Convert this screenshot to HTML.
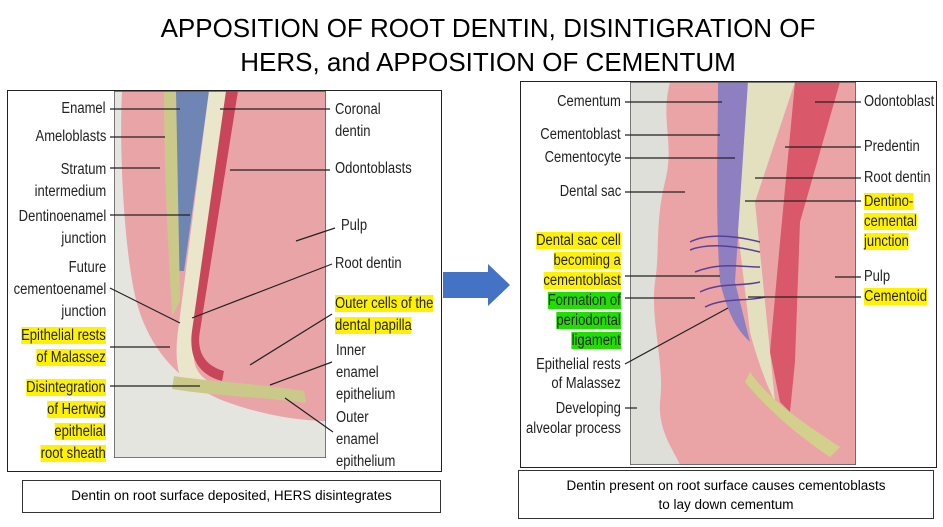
<!DOCTYPE html>
<html><head><meta charset="utf-8"><style>
body{margin:0;width:943px;height:527px;background:#fff;position:relative;overflow:hidden;font-family:"Liberation Sans",sans-serif}
.t{position:absolute;left:0;width:976px;text-align:center;font-size:26px;color:#000;line-height:34px}
.l{position:absolute;font-family:"Liberation Sans",sans-serif;font-size:15.5px;color:#222;line-height:18px;white-space:nowrap;transform:scaleX(.84);transform-origin:left top}
.r{text-align:right;transform-origin:right top}
.y{background:#fff200}
.g{background:#22dd00}
.box{position:absolute;border:1px solid #222}
.cap{position:absolute;border:1px solid #333;font-size:13.5px;text-align:center;line-height:19px}
</style></head><body>
<div class="t" style="top:11px">APPOSITION OF ROOT DENTIN, DISINTIGRATION OF</div>
<div class="t" style="top:45px">HERS, and APPOSITION OF CEMENTUM</div>

<div class="box" style="left:7px;top:90px;width:433px;height:380px"></div>
<svg style="position:absolute;left:114px;top:91px" width="212" height="367" viewBox="0 0 212 367">
<rect width="212" height="367" fill="#e9a4a8"/>
<path d="M0 0 L8 0 C5 60 10 150 20 200 C30 250 60 290 110 310 C150 325 190 330 212 330 L212 367 L0 367 Z" fill="#e5e5e0"/>
<path d="M55 0 L95 0 L70 180 L62 180 Z" fill="#6f86b5"/>
<path d="M95 0 L118 0 L80 260 C78 280 90 292 110 295 L80 300 C64 295 60 270 64 240 Z" fill="#e9e6cc"/>
<path d="M112 0 L124 0 L86 240 C82 262 92 275 110 280 L108 290 C88 285 74 270 78 240 Z" fill="#c9465a"/>
<path d="M50 0 L62 0 L66 210 L58 225 C54 150 50 80 50 0 Z" fill="#cbc98a"/>
<path d="M60 285 C90 290 140 292 190 300 L192 312 C150 306 100 305 58 298 Z" fill="#cbc98a"/>
<rect x="0" y="0" width="212" height="367" fill="none" stroke="#555" stroke-width="1.5"/>
</svg>
<div class="l r" style="right:837px;top:100px">Enamel</div>
<div class="l r" style="right:837px;top:128px">Ameloblasts</div>
<div class="l r" style="right:837px;top:159px;line-height:22px">Stratum<br>intermedium</div>
<div class="l r" style="right:837px;top:206px;line-height:22px">Dentinoenamel<br>junction</div>
<div class="l r" style="right:837px;top:257px;line-height:22px">Future<br>cementoenamel<br>junction</div>
<div class="l r" style="right:837px;top:325px;line-height:22px"><span class="y">Epithelial rests</span><br><span class="y">of Malassez</span></div>
<div class="l r" style="right:837px;top:377px;line-height:22px"><span class="y">Disintegration</span><br><span class="y">of Hertwig</span><br><span class="y">epithelial</span><br><span class="y">root sheath</span></div>
<div class="l" style="left:335px;top:99px;line-height:22px">Coronal<br>dentin</div>
<div class="l" style="left:335px;top:160px">Odontoblasts</div>
<div class="l" style="left:341px;top:217px">Pulp</div>
<div class="l" style="left:335px;top:255px">Root dentin</div>
<div class="l" style="left:335px;top:293px;line-height:22px"><span class="y">Outer cells of the</span><br><span class="y">dental papilla</span></div>
<div class="l" style="left:336px;top:340px;line-height:22px">Inner<br>enamel<br>epithelium</div>
<div class="l" style="left:336px;top:407px;line-height:22px">Outer<br>enamel<br>epithelium</div>
<svg style="position:absolute;left:0;top:0" width="943" height="527">
<g stroke="#222" stroke-width="1.2">
<line x1="110" y1="109" x2="180" y2="109"/><line x1="110" y1="137" x2="165" y2="137"/><line x1="110" y1="168" x2="160" y2="168"/><line x1="110" y1="215" x2="190" y2="215"/>
<line x1="110" y1="288" x2="180" y2="323"/><line x1="110" y1="347" x2="170" y2="347"/><line x1="110" y1="386" x2="200" y2="386"/>
<line x1="220" y1="109" x2="330" y2="109"/><line x1="230" y1="170" x2="330" y2="170"/><line x1="296" y1="241" x2="335" y2="228"/><line x1="192" y1="318" x2="332" y2="264"/><line x1="250" y1="365" x2="332" y2="314"/><line x1="270" y1="385" x2="332" y2="362"/><line x1="285" y1="398" x2="333" y2="432"/>
</g>
<path d="M443 272 L488 272 L488 264 L510 285 L488 306 L488 298 L443 298 Z" fill="#4472c4"/>
</svg>
<div class="cap" style="left:22px;top:480px;width:417px;height:31px;line-height:30px">Dentin on root surface deposited, HERS disintegrates</div>

<div class="box" style="left:520px;top:81px;width:415px;height:385px"></div>
<svg style="position:absolute;left:630px;top:82px" width="226" height="383" viewBox="0 0 226 383">
<rect width="226" height="383" fill="#eba4a6"/>
<path d="M0 0 L40 0 C30 40 45 60 35 100 C25 140 30 170 25 200 C20 240 35 280 30 320 C28 350 45 370 50 383 L0 383 Z" fill="#dedfd8"/>
<path d="M88 0 L118 0 L105 200 L120 260 C110 250 100 240 90 200 C85 130 88 60 88 0 Z" fill="#8e7fc0"/>
<path d="M118 0 L165 0 L125 120 L145 320 C135 300 125 270 120 250 L108 150 Z" fill="#e3e0bf"/>
<path d="M165 0 L210 0 L170 140 L165 280 L160 330 L150 320 L140 270 L150 160 Z" fill="#d9596a"/>
<path d="M120 290 C140 320 180 345 210 365 L200 375 C170 355 140 330 115 300 Z" fill="#d3d08c"/>
<g stroke="#5b3e96" stroke-width="1.5" fill="none"><path d="M60 160 C80 150 110 155 130 160"/><path d="M60 168 C80 160 110 165 130 170"/><path d="M65 190 C90 180 110 185 130 185"/><path d="M70 210 C90 200 110 205 130 200"/><path d="M75 225 C95 215 115 220 135 215"/></g>
<rect width="226" height="383" fill="none" stroke="#555" stroke-width="1.5"/>
</svg>
<div class="l r" style="right:322px;top:93px">Cementum</div>
<div class="l r" style="right:322px;top:126px">Cementoblast</div>
<div class="l r" style="right:322px;top:149px">Cementocyte</div>
<div class="l r" style="right:322px;top:183px">Dental sac</div>
<div class="l r" style="right:322px;top:231px;line-height:20px"><span class="y">Dental sac cell</span><br><span class="y">becoming a</span><br><span class="y">cementoblast</span><br><span class="g">Formation of</span><br><span class="g">periodontal</span><br><span class="g">ligament</span></div>
<div class="l r" style="right:322px;top:355px;line-height:19px">Epithelial rests<br>of Malassez</div>
<div class="l r" style="right:322px;top:399px;line-height:20px">Developing<br>alveolar process</div>
<div class="l" style="left:864px;top:93px">Odontoblast</div>
<div class="l" style="left:864px;top:138px">Predentin</div>
<div class="l" style="left:864px;top:169px">Root dentin</div>
<div class="l" style="left:864px;top:192px;line-height:20px"><span class="y">Dentino-</span><br><span class="y">cemental</span><br><span class="y">junction</span></div>
<div class="l" style="left:864px;top:268px">Pulp</div>
<div class="l" style="left:864px;top:288px"><span class="y">Cementoid</span></div>
<svg style="position:absolute;left:0;top:0" width="943" height="527">
<g stroke="#222" stroke-width="1.2">
<line x1="625" y1="102" x2="722" y2="102"/><line x1="625" y1="135" x2="720" y2="135"/><line x1="625" y1="158" x2="735" y2="158"/><line x1="625" y1="192" x2="685" y2="192"/>
<line x1="625" y1="276" x2="720" y2="276"/><line x1="625" y1="298" x2="695" y2="298"/><line x1="625" y1="364" x2="728" y2="308"/><line x1="625" y1="408" x2="637" y2="408"/>
<line x1="815" y1="102" x2="861" y2="102"/><line x1="785" y1="147" x2="861" y2="147"/><line x1="755" y1="178" x2="861" y2="178"/><line x1="745" y1="201" x2="861" y2="201"/><line x1="835" y1="277" x2="861" y2="277"/><line x1="748" y1="297" x2="861" y2="297"/>
</g></svg>
<div class="cap" style="left:518px;top:470px;width:416px;height:49px;padding-top:5px;box-sizing:border-box">Dentin present on root surface causes cementoblasts<br>to lay down cementum</div>
</body></html>
